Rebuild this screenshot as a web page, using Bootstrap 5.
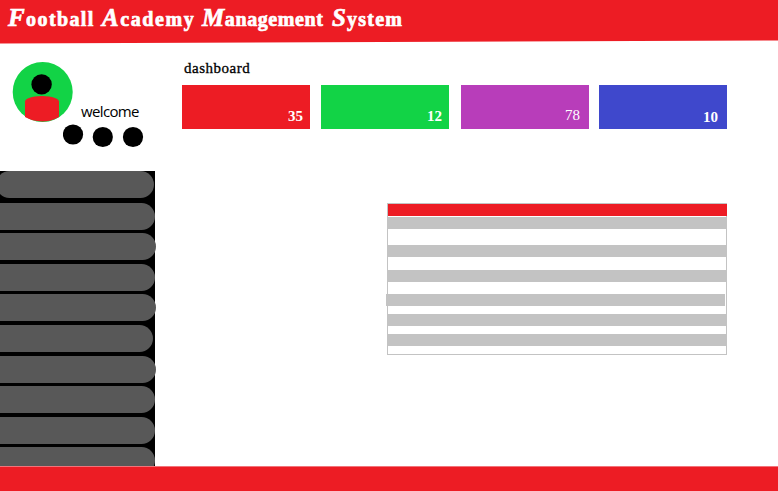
<!DOCTYPE html>
<html lang="en">
<head>
<meta charset="utf-8">
<meta name="viewport" content="width=device-width, initial-scale=1">
<title>Football Academy Management System</title>
<link href="https://cdn.jsdelivr.net/npm/bootstrap@5.3.0/dist/css/bootstrap.min.css" rel="stylesheet">
<style>
body{height:491px;background:#fff;color:#000;font-family:"Liberation Serif",serif}
.topbar{height:44px;background:#ed1c24;padding:5px 0 0 8px;clip-path:polygon(0 0,100% 0,100% 40.5px,0 43.6px)}
.brand{font-size:20px;font-weight:700;line-height:28px;color:#fff;-webkit-text-stroke:.7px #fff}
.brand span{white-space:nowrap}
.brand i{font-size:25px;line-height:20px}
.w1{width:94px;letter-spacing:1.4px}.w2{width:100px;letter-spacing:1.6px}.w3{width:130px;letter-spacing:.6px}.w4{width:75px;letter-spacing:1.2px}
.side{width:156px}
.profile{height:127px;padding:18px 0 0 12px}
.profile .avatar{width:62px;height:62px}
.welcome{font:15px/20px "Open Sans",sans-serif;height:20px;margin:39px 0 0 7px;letter-spacing:-.65px}
.dots{margin:0 0 0 51px;width:82px;height:24px}
.menu{width:155px;height:295px;background:#000;clip-path:inset(0 -2px 0 0)}
.pill{display:block;flex:none;height:27px;width:155px;margin-top:3.6px;background:#585858;border-radius:0 14px 14px 0}
.pill:first-child{width:158px;margin:.4px 0 0 -4px;border-radius:14px}
.pill:nth-child(2){margin-top:4.3px}
.pill.wide{width:155.8px}.pill.short{width:152.7px}
.content{padding:13px 51px 0 26px}
h1{font-size:15px;line-height:22px;letter-spacing:.5px;margin:0 0 6px 2px;font-weight:400;-webkit-text-stroke:.3px #000}
.stats{height:44px}
.stat{width:128px;color:#fff;font-size:15px;line-height:20px;font-weight:700;padding:21px 7px 0 0}
.red{background:#ed1c24}.green{background:#12d346;margin-left:11px}.purple{background:#b83dba;margin-left:12px}.blue{background:#3f48cc;margin-left:10px}
.purple{font-weight:400;padding:20px 9px 0 0}.blue{padding-top:22px;padding-right:9px}
.grid{width:340px;height:152px;margin-top:74px;border:1px solid #c3c3c3}
.grid div{height:12px;background:#c3c3c3}
.grid .head{background:#ed1c24;margin-right:-1px}
.g1{margin-top:1px}.g2{margin-top:16px}.g3{margin-top:13px}.grid .g4{margin:12px 1px 0 -2px}.g5,.g6{margin-top:8px}
.foot{height:25px;background:#ed1c24;border-top:1px solid #f2737a}
.main{height:422px}
</style>
<script src="https://cdn.jsdelivr.net/npm/bootstrap@5.3.0/dist/js/bootstrap.bundle.min.js"></script>
</head>
<body class="d-flex flex-column overflow-hidden m-0">
<header class="topbar flex-shrink-0">
  <div class="brand d-flex align-items-baseline"><span class="w1"><i>F</i>ootball</span><span class="w2"><i>A</i>cademy</span><span class="w3"><i>M</i>anagement</span><span class="w4"><i>S</i>ystem</span></div>
</header>
<div class="main d-flex flex-shrink-0">
  <aside class="side flex-shrink-0">
    <div class="profile">
      <div class="d-flex">
        <svg class="avatar flex-shrink-0" viewBox="12 62 62 62"><circle cx="42.7" cy="92" r="30" fill="#12d346"/><circle cx="41.6" cy="84.4" r="10.2"/><path d="M25 101.5Q26 96.5 42 96Q58 96.500 59 101.500V117Q51 121.500 42 121.500Q32 121 25 117Z" fill="#ed1c24"/></svg>
        <div class="welcome">welcome</div>
      </div>
      <svg class="dots d-block" viewBox="63 124 82 24"><circle cx="73" cy="134.500" r="10.1"/><circle cx="102.800" cy="137" r="10.1"/><circle cx="133" cy="137" r="10.1"/></svg>
    </div>
    <nav class="menu d-flex flex-column">
      <a class="pill"></a><a class="pill"></a><a class="pill wide"></a><a class="pill"></a><a class="pill wide"></a><a class="pill short"></a><a class="pill wide"></a><a class="pill"></a><a class="pill"></a><a class="pill"></a>
    </nav>
  </aside>
  <main class="content flex-grow-1">
    <h1>dashboard</h1>
    <div class="stats d-flex">
      <div class="stat red text-end">35</div><div class="stat green text-end">12</div><div class="stat purple text-end">78</div><div class="stat blue text-end">10</div>
    </div>
    <div class="grid ms-auto"><div class="head"></div><div class="g1"></div><div class="g2"></div><div class="g3"></div><div class="g4"></div><div class="g5"></div><div class="g6"></div></div>
  </main>
</div>
<footer class="foot flex-shrink-0"></footer>
</body>
</html>
